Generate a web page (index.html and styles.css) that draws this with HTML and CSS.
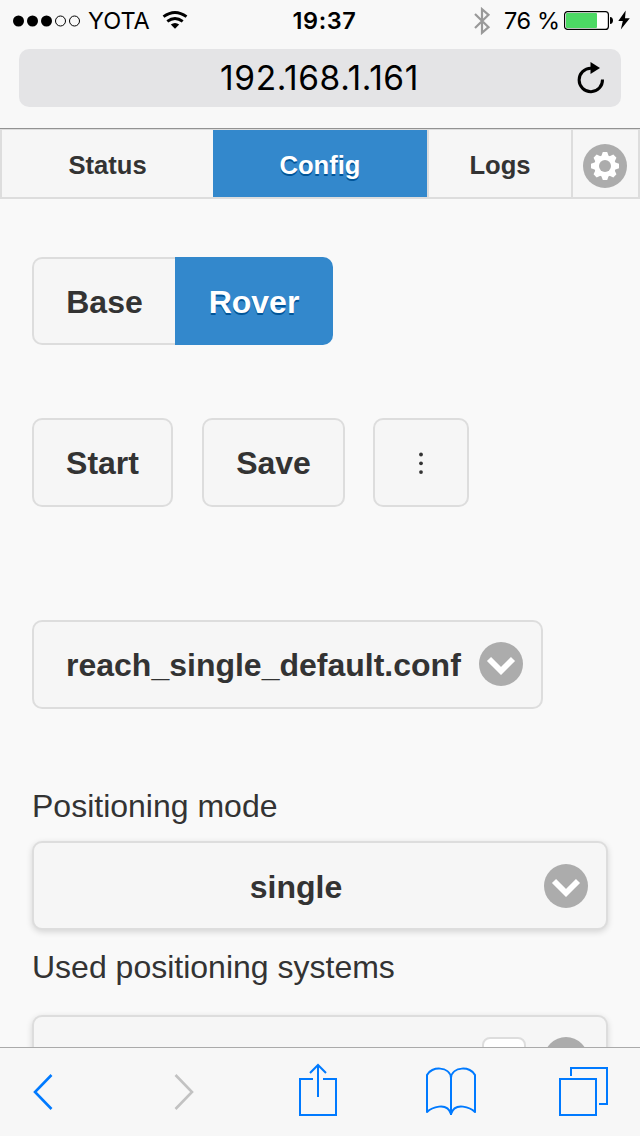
FILE: index.html
```html
<!DOCTYPE html>
<html lang="en">
<head>
<meta charset="utf-8">
<title>Reach configuration</title>
<link rel="stylesheet" href="styles.css">
</head>
<body>
<div class="phone">
  <header class="chrome">
    <div class="status">
      <div class="status-left">
        <svg class="signal" width="68" height="12" viewBox="0 0 68 12"><g fill="#000"><circle cx="5.5" cy="6" r="5.5"/><circle cx="19.5" cy="6" r="5.5"/><circle cx="33.5" cy="6" r="5.5"/></g><g fill="none" stroke="#000"><circle cx="47.5" cy="6" r="5"/><circle cx="61.5" cy="6" r="5"/></g></svg>
        <span class="carrier">YOTA</span>
        <svg class="wifi" width="26" height="18" viewBox="0 0 26 18"><g fill="none" stroke="#000" stroke-width="2.900"><path d="M1.500 5.700Q13-2.700 24.500 5.700"/><path d="M5.300 10.300Q13 4.500 20.700 10.300"/></g><path d="M13 17.800l-4.200-4.200Q13 10.200 17.200 13.600z"/></svg>
      </div>
      <span class="time">19:37</span>
      <div class="status-right">
        <svg class="bluetooth" width="18" height="28" viewBox="0 0 18 28"><path d="M2 7l13.500 13.200L9 25.800V2.200l6.500 5.600L2 21" fill="none" stroke="#999" stroke-width="2.200"/></svg>
        <span class="charge">76 %</span>
        <svg class="battery" width="50" height="20" viewBox="0 0 50 20"><rect x=".6" y=".6" width="43.800" height="17.800" rx="3" fill="#fff" stroke="#000" stroke-width="1.200"/><rect x="2" y="2" width="31" height="15" rx="1" fill="#4cd964"/><path d="M46 6c4 0 4 7 0 7z"/></svg>
        <svg class="bolt" width="12" height="20" viewBox="0 0 12 20"><path d="M7.700.5L.3 11H4.800L2.800 19.500 11.800 8.200H7z"/></svg>
      </div>
    </div>
    <div class="address">
      <span class="host">192.168.1.161</span>
      <svg class="reload" width="28" height="32" viewBox="0 0 28 32"><path d="M25.500 17.500A11.700 11.700 0 1 1 14 6.300" fill="none" stroke="#000" stroke-width="3"/><path d="M13.500 0v12l9.500-6z"/></svg>
    </div>
  </header>
  <nav class="tabs">
    <a class="tab">Status</a>
    <a class="tab active">Config</a>
    <a class="tab">Logs</a>
    <a class="tab"><svg class="gear" width="44" height="44" viewBox="-22 -22 44 44"><circle r="22" fill="#acacac"/><g fill="#fff"><circle r="10.800"/><path id="tooth" d="M-4-9L-2.200-14H2.200L4-9V9L2.200 14H-2.200L-4 9z"/><use href="#tooth" transform="rotate(45)"/><use href="#tooth" transform="rotate(90)"/><use href="#tooth" transform="rotate(135)"/></g><circle r="6" fill="#acacac"/></svg></a>
  </nav>
  <main class="content">
    <div class="toggle"><button class="option">Base</button><button class="option selected">Rover</button></div>
    <div class="actions">
      <button class="button start">Start</button>
      <button class="button save">Save</button>
      <button class="button more" aria-label="More"><svg width="4" height="24" viewBox="0 0 4 24" fill="#333"><circle cx="2" cy="2.500" r="1.900"/><circle cx="2" cy="11.300" r="1.900"/><circle cx="2" cy="20.100" r="1.900"/></svg></button>
    </div>
    <div class="button file"><span>reach_single_default.conf</span><svg class="chevron" width="44" height="44" viewBox="0 0 44 44"><circle cx="22" cy="22" r="22" fill="#acacac"/><path d="M10 17l12 12 12-12" fill="none" stroke="#fff" stroke-width="5.800"/></svg></div>
    <label class="label mode">Positioning mode</label>
    <div class="button select"><span class="value">single</span><svg class="chevron" width="44" height="44" viewBox="0 0 44 44"><circle cx="22" cy="22" r="22" fill="#acacac"/><path d="M10 17l12 12 12-12" fill="none" stroke="#fff" stroke-width="5.800"/></svg></div>
    <label class="label systems">Used positioning systems</label>
    <div class="button select multi"><span class="count"></span><svg class="chevron" width="44" height="44" viewBox="0 0 44 44"><circle cx="22" cy="22" r="22" fill="#acacac"/><path d="M10 17l12 12 12-12" fill="none" stroke="#fff" stroke-width="5.800"/></svg></div>
  </main>
  <footer class="toolbar">
    <svg width="20" height="36" viewBox="0 0 20 36"><path d="M18.500 1L2 18l16.500 17" class="line thick"/></svg>
    <svg class="forward" width="20" height="36" viewBox="0 0 20 36"><path d="M1.500 1L18 18 1.500 35" class="line thick muted"/></svg>
    <svg class="share" width="38" height="54" viewBox="0 0 38 54"><path d="M14 17H1v36h36V17H24M19 35V3M11 11l8-8 8 8" class="line"/></svg>
    <svg class="book" width="50" height="50" viewBox="0 0 50 50"><path d="M25 48V11C24-1 5-1 1 8v37C5 41 21 34 25 47 29 34 45 41 49 45V8C45-1 26-1 25 11" class="line round"/></svg>
    <svg class="pages" width="49" height="49" viewBox="0 0 49 49"><path d="M1 12h36v36H1zM12 9V1h36v36h-8" class="line"/></svg>
  </footer>
</div>
</body>
</html>
```
FILE: styles.css
```css
* { box-sizing: border-box; }
body { margin: 0; background: #f9f9f9; }
svg { display: block; flex: none; }
.phone {
  width: 640px;
  height: 1136px;
  display: flex;
  flex-direction: column;
  overflow: hidden;
  background: #f9f9f9;
  color: #333;
  font-family: "Liberation Sans", Arial, sans-serif;
}
.chrome {
  flex: none;
  height: 129px;
  background: #f8f8f8;
  border-bottom: 1px solid #929292;
  color: #000;
  font-family: Inter, sans-serif;
}
.status {
  display: grid;
  grid-template-columns: 240px 160px 240px;
  height: 49px;
  padding-bottom: 8px;
  align-items: center;
  font-size: 23.500px;
  line-height: 28px;
  white-space: nowrap;
}
.status-left, .status-right { display: flex; align-items: center; }
.status-left { padding-left: 13px; }
.carrier { width: 62px; margin-left: 7px; }
.wifi { margin-left: 12px; margin-top: -1px; }
.time { text-align: center; font-weight: 600; letter-spacing: .6px; padding-left: 9px; }
.status-right { padding-left: 73px; }
.charge { width: 55px; margin-left: 13px; letter-spacing: -.4px; }
.battery { margin-left: 5px; }
.bolt { margin-left: 4px; margin-top: -1px; }
.address {
  display: grid;
  grid-template-columns: 1fr 45px;
  align-items: center;
  height: 58px;
  margin: 0 19px;
  padding-left: 44px;
  background: #e4e4e6;
  border-radius: 10px;
}
.host { text-align: center; font-size: 33.500px; line-height: 40px; letter-spacing: .6px; margin-top: -1px; }
.reload { margin-left: 1px; margin-top: -1px; }
.tabs {
  flex: none;
  display: grid;
  grid-template-columns: 211px 214px 144px 67px;
  height: 70px;
  border: 2px solid #ddd;
  border-top-width: 1px;
  background: #f6f6f6;
  font-size: 25.600px;
  font-weight: bold;
}
.tab { display: flex; align-items: center; justify-content: center; padding-top: 4px; }
.tab:nth-child(n+3) { border-left: 2px solid #ddd; }
.tab:last-child { justify-content: flex-start; padding: 5px 2px 0 10px; }
.active, .selected { background: #38c; color: #fff; text-shadow: 0 2px 0 #059; }
.content { flex: 1; min-height: 0; overflow: hidden; padding: 58px 32px 0; }
button { font: inherit; color: inherit; margin: 0; }
.toggle, .actions, .button, .option { font-size: 32px; font-weight: bold; }
.toggle { display: flex; height: 88px; }
.option {
  width: 143px;
  padding: 2px 0 0;
  border: 2px solid #ddd;
  border-right: 0;
  border-radius: 10px 0 0 10px;
  background: #f6f6f6;
}
.option.selected {
  width: 158px;
  border: 0;
  border-radius: 0 10px 10px 0;
  background: #38c;
  color: #fff;
}
.actions { display: flex; margin-top: 73px; }
.button {
  display: flex;
  align-items: center;
  justify-content: center;
  height: 89px;
  padding: 2px 0 0;
  border: 2px solid #ddd;
  border-radius: 10px;
  background: #f6f6f6;
}
.start { width: 141px; }
.save { width: 143px; margin-left: 29px; }
.more { width: 96px; margin-left: 28px; }
.file { width: 511px; margin-top: 113px; padding-left: 32px; padding-right: 18px; justify-content: space-between; }
.file .chevron { margin-top: -3px; }
.select .chevron { margin-top: -2px; }
.label { display: block; height: 40px; font-size: 32px; line-height: 40px; white-space: nowrap; }
.mode { margin-top: 77px; }
.select {
  display: grid;
  grid-template-columns: 1fr 44px;
  margin-top: 15px;
  padding-right: 18px;
  box-shadow: 0 2px 6px rgba(0, 0, 0, .15);
}
.value { text-align: center; padding: 1px 0 0 14px; }
.systems { margin-top: 17px; }
.multi { margin-top: 28px; height: 90px; align-items: start; padding-top: 20px; column-gap: 18px; }
.multi .chevron { margin-top: 0; }
.count { justify-self: end; width: 44px; height: 44px; border: 2px solid #ddd; border-radius: 8px; background: #fff; }
.toolbar {
  flex: none;
  display: flex;
  height: 89px;
  padding: 26px 32px 0 33px;
  border-top: 1px solid #aaa;
  background: #f7f7f7;
  align-items: flex-start;
}
.forward { margin-left: 121px; }
.share { margin-left: 105px; margin-top: -12px; }
.book { margin-left: 89px; margin-top: -7px; }
.pages { margin-left: 83px; margin-top: -7px; }
.line { fill: none; stroke: #007aff; stroke-width: 2; }
.line.thick { stroke-width: 2.6; }
.line.round { stroke-linejoin: round; }
.line.muted { stroke: #c2c2c2; }
```
